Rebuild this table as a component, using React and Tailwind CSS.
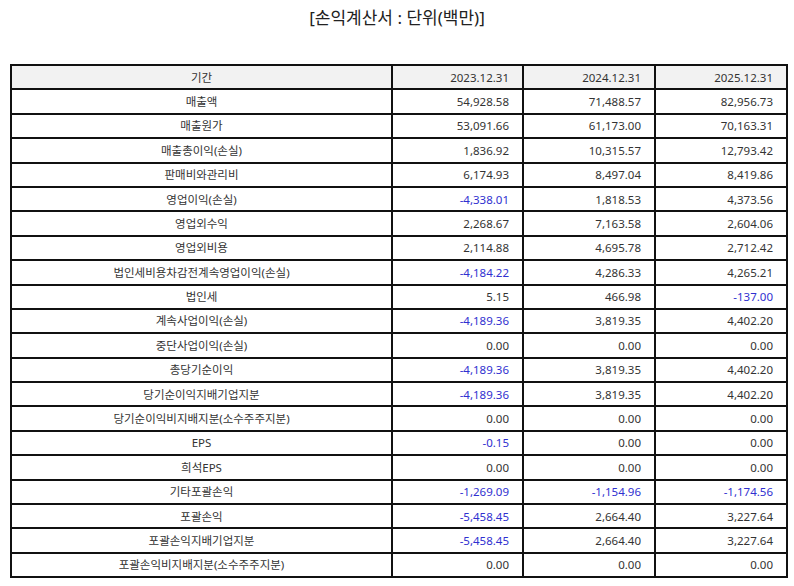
import React from 'react';

const rows = [
    ['매출액', '54,928.58', '71,488.57', '82,956.73'],
    ['매출원가', '53,091.66', '61,173.00', '70,163.31'],
    ['매출총이익(손실)', '1,836.92', '10,315.57', '12,793.42'],
    ['판매비와관리비', '6,174.93', '8,497.04', '8,419.86'],
    ['영업이익(손실)', '-4,338.01', '1,818.53', '4,373.56'],
    ['영업외수익', '2,268.67', '7,163.58', '2,604.06'],
    ['영업외비용', '2,114.88', '4,695.78', '2,712.42'],
    ['법인세비용차감전계속영업이익(손실)', '-4,184.22', '4,286.33', '4,265.21'],
    ['법인세', '5.15', '466.98', '-137.00'],
    ['계속사업이익(손실)', '-4,189.36', '3,819.35', '4,402.20'],
    ['중단사업이익(손실)', '0.00', '0.00', '0.00'],
    ['총당기순이익', '-4,189.36', '3,819.35', '4,402.20'],
    ['당기순이익지배기업지분', '-4,189.36', '3,819.35', '4,402.20'],
    ['당기순이익비지배지분(소수주주지분)', '0.00', '0.00', '0.00'],
    ['EPS', '-0.15', '0.00', '0.00'],
    ['희석EPS', '0.00', '0.00', '0.00'],
    ['기타포괄손익', '-1,269.09', '-1,154.96', '-1,174.56'],
    ['포괄손익', '-5,458.45', '2,664.40', '3,227.64'],
    ['포괄손익지배기업지분', '-5,458.45', '2,664.40', '3,227.64'],
    ['포괄손익비지배지분(소수주주지분)', '0.00', '0.00', '0.00'],
];

const periods = ['2023.12.31', '2024.12.31', '2025.12.31'];

export default function App() {
    return (
        <div className="w-[794px] h-[586px] bg-white text-[#333] font-['Noto_Sans','Noto_Sans_CJK_KR',sans-serif]">
            <h1 className="pt-[5px] h-[64px] text-center text-[17px] leading-[26px] text-[#222]">
                [손익계산서 : 단위(백만)]
            </h1>

            <table className="ml-[10px] w-[776px] table-fixed border-collapse text-[11.5px]">
                <colgroup>
                    <col className="w-[381px]" />
                    <col className="w-[131px]" />
                    <col className="w-[132px]" />
                    <col className="w-[132px]" />
                </colgroup>
                <thead>
                    <tr className="h-[24.4px] bg-[#f2f2f2]">
                        <th className="border-2 border-[#111] font-normal text-center">기간</th>
                        {periods.map(p => (
                            <th key={p} className="border-2 border-[#111] font-normal text-right pr-[13px]">
                                {p}
                            </th>
                        ))}
                    </tr>
                </thead>
                <tbody>
                    {rows.map(([label, ...values]) => (
                        <tr key={label} className="h-[24.4px]">
                            <td className="border-2 border-[#111] text-center">{label}</td>
                            {values.map((v, i) => (
                                <td
                                    key={i}
                                    className={`border-2 border-[#111] text-right pr-[13px] ${v.startsWith('-') ? 'text-[#3030d0]' : ''}`}
                                >
                                    {v}
                                </td>
                            ))}
                        </tr>
                    ))}
                </tbody>
            </table>
        </div>
    );
}
